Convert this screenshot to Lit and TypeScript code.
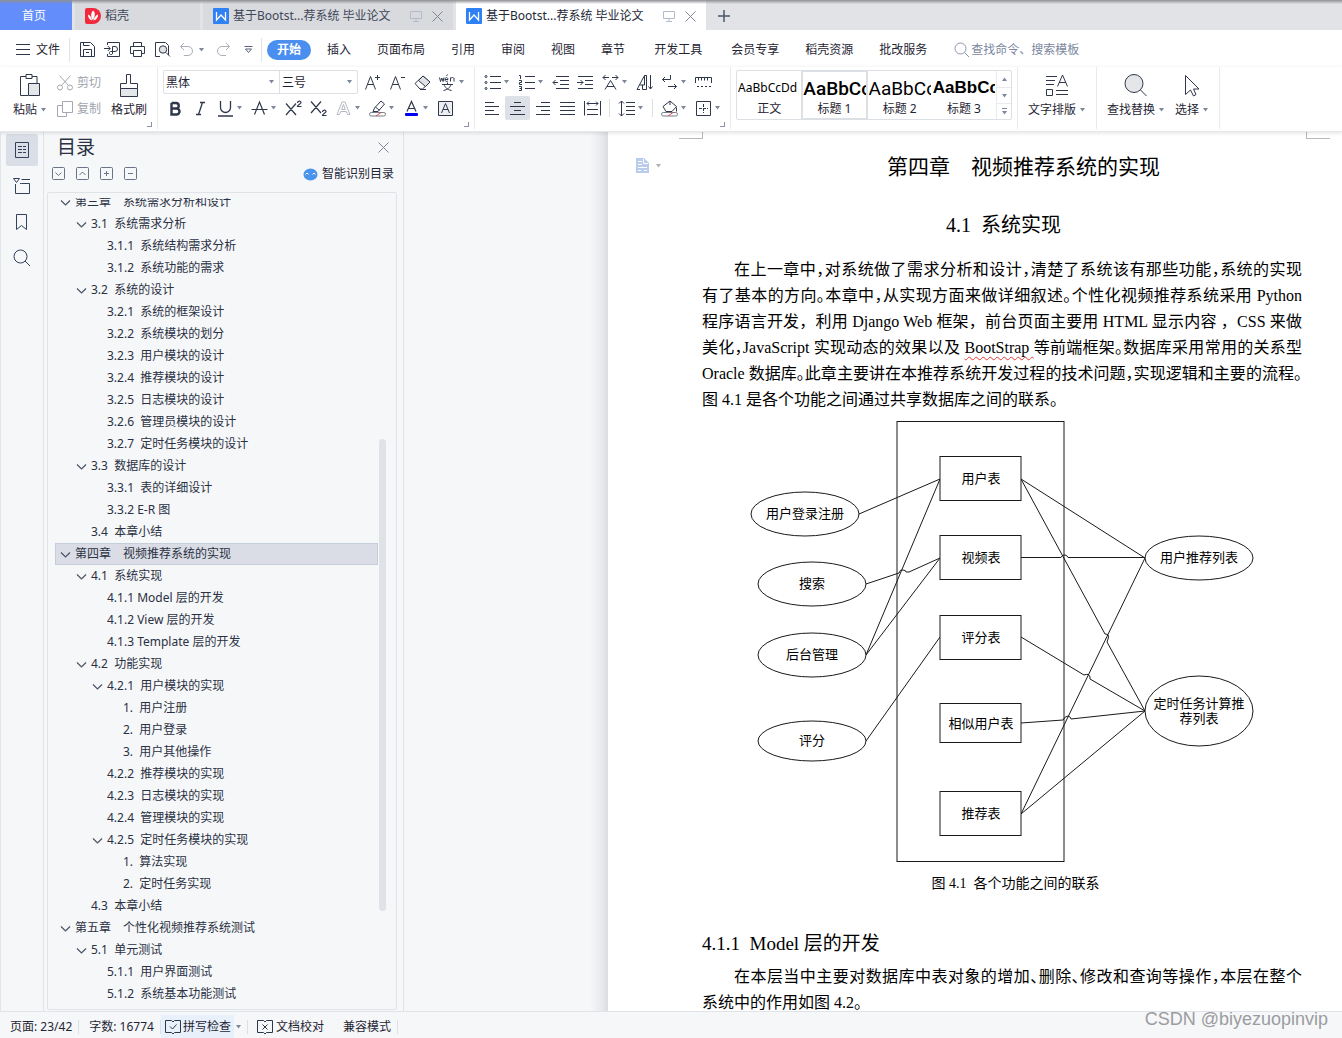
import { LitElement, html, svg, css, nothing, TemplateResult, SVGTemplateResult } from "lit";
import { customElement, state } from "lit/decorators.js";
import { classMap } from "lit/directives/class-map.js";

/* ---------- icons ---------- */

type Icon = { w: number; h: number; body: SVGTemplateResult };

const icons: Record<string, Icon> = {
  menu: { w: 15, h: 15, body: svg`<path d="M0 2.5h14M0 7.5h14M0 12.5h14" />` },
  save: { w: 17, h: 17, body: svg`<path d="M1.5 1.5h10l4 4v10h-14zM4.500 15.500v-7h8v7M4.500 1.500v3h6" /><path d="M7 11.500h3" />` },
  export: { w: 17, h: 17, body: svg`<path d="M3.500 4V1.500h12v14h-12V13M0 7.500h6M3.800 5l2.500 2.500L3.800 10M8.500 13V5.500h2.500a2 2 0 0 1 0 5H6.500a1.600 1.600 0 1 0 2 2" />` },
  print: { w: 17, h: 17, body: svg`<path d="M4.500 5.500v-4h8v4M4.500 12.500h-3v-7h14v7h-3M4.500 9.500h8v6h-8z" />` },
  preview: { w: 17, h: 17, body: svg`<path d="M6 15.500H1.500v-14h10l3 3V14" /><circle cx="9" cy="8.500" r="3.700" fill="#e2e4e8" /><path d="M12 11.500l4 4" />` },
  undo: { w: 15, h: 15, body: svg`<path stroke="#a9aeb9" d="M5 1L1.500 4.500 5 8M1.500 4.500H9a4.500 4.500 0 0 1 0 9H5" />` },
  redo: { w: 15, h: 15, body: svg`<path stroke="#a9aeb9" d="M10 1l3.500 3.500L10 8M13.500 4.500H6a4.500 4.500 0 0 0 0 9h4" />` },
  more: { w: 9, h: 9, body: svg`<path d="M0.500 1.500h8M1.500 4l3 3.500L7.500 4z" stroke="#59617a" />` },
  search: { w: 16, h: 16, body: svg`<circle cx="6.500" cy="6.500" r="5.500" /><path d="M10.500 10.500l4.500 4.500" />` },
  paste: { w: 24, h: 24, body: svg`<path d="M8 3.500H2.500v19H10M14 3.500h5V10M8 1.500h6v4H8z" /><path d="M10.500 10.500h11v12h-11z" fill="#e4e6ea" />` },
  brush: { w: 24, h: 24, body: svg`<path d="M3.500 15.500h17v8h-17z" fill="#e4e6ea" /><path d="M3.500 15.500v-5h6v-9h4v9h7v5" />` },
  cut: { w: 16, h: 16, body: svg`<g stroke="#a4a8b0"><circle cx="3" cy="12.500" r="2.500" /><circle cx="13" cy="12.500" r="2.500" /><path d="M2.500 0.500l9 10M13.500 0.500l-9 10" /></g>` },
  copy: { w: 16, h: 16, body: svg`<g stroke="#a4a8b0"><path d="M5.500 0.500h10v11h-10zM5.500 4.500h-5v11h9v-4" /></g>` },
  grow: { w: 17, h: 17, body: svg`<path d="M1.500 15.500L6.500 2.500l5 13M3.500 10.500h6M11 3.500h5M13.500 1v5" />` },
  shrink: { w: 17, h: 17, body: svg`<path d="M1.500 15.500L6.500 2.500l5 13M3.500 10.500h6M12 3.500h4" />` },
  eraser: { w: 17, h: 17, body: svg`<path d="M1 9.500L9 2l7 6-7.500 7H6z" /><path d="M4.500 6.500L9 2l7 6-4.500 4.500z" fill="#e0e2e6" /><path d="M6 15.500h6" />` },
  pinyin: { w: 17, h: 17, body: svg`<path d="M0.500 3.500l1 4 1.300-3.500L4 7.500l1-4M6 5.500h3c0-2.500-3-2.500-3 0s2 2 3 1.500M7.500 2l1-1.500M11.500 7.500v-4M11.500 5c.5-2 3.500-2 3.500 0v2.500M3 10.500h11M8.500 8.500v2M5 10.500c1 3 3 5 7.500 6M12 10.500c-1 3-3 5-7.500 6" />` },
  bold: { w: 17, h: 17, body: svg`<path stroke-width="2.400" d="M4.500 3v11.500h5a3 3 0 0 0 0-6h-5M9 8.500A2.700 2.700 0 0 0 9 3H4.500" />` },
  italic: { w: 17, h: 17, body: svg`<path d="M8 2.500h5M4 14.500h5M10.500 2.500l-4 12" stroke-width="1.300" />` },
  underline: { w: 17, h: 17, body: svg`<path stroke-width="1.300" d="M3.500 1v6.500a5 5 0 0 0 10 0V1M1 16h15" />` },
  strike: { w: 17, h: 17, body: svg`<path stroke-width="1.200" d="M3.500 14.500l5-12.500 5 12.500M0.500 9.500h16" />` },
  sup: { w: 17, h: 17, body: svg`<path stroke-width="1.200" d="M1 3.500l10 11.500M11 3.500L1 15M12.500 3c0-2.500 3.500-2.500 3.500-.5 0 1.500-3.500 2-3.500 4H16.500" />` },
  sub: { w: 17, h: 17, body: svg`<path stroke-width="1.200" d="M1 1.500L11 13M11 1.500L1 13M12.500 12c0-2.500 3.500-2.500 3.500-.5 0 1.500-3.500 2-3.500 4H16.500" />` },
  effects: { w: 17, h: 17, body: svg`<path stroke="#b4b8c0" d="M2 14.500L7 2h3l5 12.500h-2.500l-1.200-3H5.700l-1.200 3zM6.700 9.500h3.600L8.500 4.500z" />` },
  marker: { w: 17, h: 17, body: svg`<path d="M4 11.500L5.500 8 12 1l3.500 3-6.500 7.500zM6.500 7l4 3.500" /><rect x="0.500" y="12.500" width="16" height="3.500" rx="1.700" stroke="#777d89" fill="#fff" /><path d="M7 16l5-3.500" stroke="#e84a4a" />` },
  color: { w: 17, h: 17, body: svg`<path stroke-width="1.200" d="M4 11.500l4.500-10 4.500 10M5.500 8.500h6" /><rect x="2" y="13" width="13" height="3" rx="1" fill="#0000f5" stroke="none" />` },
  charbox: { w: 17, h: 17, body: svg`<path d="M1.500 1.500h14v14h-14z" fill="#eceef1" /><path d="M4.500 13l4-9.500 4 9.500M6 9.500h5" />` },
  bullets: { w: 17, h: 17, body: svg`<path d="M6 2.500h11M6 8.500h11M6 14.500h11" /><circle cx="2" cy="2.500" r="1" /><circle cx="2" cy="8.500" r="1" /><circle cx="2" cy="14.500" r="1" />` },
  numbers: { w: 17, h: 17, body: svg`<path d="M7 2.500h10M7 8.500h10M7 14.500h10M1 1.500h1.500V5M1 6.500h2.500v2H1.500v2H4M1 12.500h2.500v4H1M1.500 14.500h2" />` },
  outdent: { w: 17, h: 17, body: svg`<path d="M4 2.500h13M8 6.500h9M8 10.500h9M4 14.500h13M1 8.500h5M3.500 6L1 8.500 3.500 11" />` },
  indent: { w: 17, h: 17, body: svg`<path d="M1 2.500h15M8 6.500h8M8 10.500h8M1 14.500h15M0 8.500h6M3.500 6L6 8.500 3.500 11" />` },
  scale: { w: 17, h: 17, body: svg`<path d="M3 15.500l5.500-9 5.500 9M5 12.500h7M1 3.500h6M10 3.500h6M3.500 1L1 3.500 3.500 6M13.500 1L16 3.500 13.500 6" />` },
  sort: { w: 17, h: 17, body: svg`<path d="M1 15.500L8.500 1.500h2v14h-4v-4.500H3.500M8.500 1.500v9.500H6M1 15.500h3M14.500 1v14M12.500 12.500l2 2.500 2-2.500" />` },
  wrap: { w: 17, h: 17, body: svg`<path d="M9.500 1v4.500h-8M4 3L1.500 5.500 4 8M7 12.500h8.500M13 10l2.500 2.500L13 15" />` },
  ruler: { w: 17, h: 17, body: svg`<path d="M0.500 9V3.500h16V9M3.500 3.500v3M6.500 3.500v3M9.500 3.500v3M12.500 3.500v3M2 12.500h2M6 12.500h2M10 12.500h2M14 12.500h2" />` },
  left: { w: 17, h: 17, body: svg`<path d="M1 2.500h9M1 6.500h14M1 10.500h9M1 14.500h14" />` },
  center: { w: 17, h: 17, body: svg`<path d="M5 2.500h7M1 6.500h15M5 10.500h7M1 14.500h15" />` },
  right: { w: 17, h: 17, body: svg`<path d="M7 2.500h9M2 6.500h14M7 10.500h9M2 14.500h14" />` },
  justify: { w: 17, h: 17, body: svg`<path d="M1 2.500h15M1 6.500h15M1 10.500h15M1 14.500h15" />` },
  distribute: { w: 17, h: 17, body: svg`<path d="M0.500 1v14.500M16.500 1v14.500M3 3.500h11M5 1.500l-2 2 2 2M12 1.500l2 2-2 2M3 9.500h11M3 14.500h11" />` },
  spacing: { w: 17, h: 17, body: svg`<path d="M3.500 1v15M1 3.500L3.500 1 6 3.500M1 13.500L3.500 16 6 13.500M8 2.500h9M8 6.500h9M8 10.500h9M8 14.500h9" />` },
  fill: { w: 17, h: 17, body: svg`<path d="M2 6.500L9 1l6.500 5.500L11 11.500H5zM9 1v4" /><path d="M15.500 7.500v4" /><rect x="0.500" y="12.500" width="16" height="3.500" rx="1.700" stroke="#777d89" fill="#fff" /><path d="M7 16l5-3.500" stroke="#e84a4a" />` },
  borders: { w: 17, h: 17, body: svg`<path d="M1.500 1.500h14v14h-14z" /><path d="M8.500 4v9M4 8.500h9" stroke-dasharray="3 1" />` },
  textLayout: { w: 24, h: 24, body: svg`<path d="M1 3.500h11M1 7.500h9M1 11.500h8M12.500 13.500L17.500 2l5 11.500M14 9.500h7M11 17.500h12M11 21.500h12M1.500 16.500h6v6h-6z" />` },
  find: { w: 24, h: 24, body: svg`<circle cx="10" cy="10.500" r="9" fill="#e4e6ea" /><path d="M16.500 17l6 6" />` },
  cursor: { w: 24, h: 24, body: svg`<path d="M5.500 2.500v19l5-4.500 3 6 2.500-1.500-2.500-5.500h5.500z" />` },
  outline: { w: 18, h: 18, body: svg`<path stroke="#33415c" d="M2.500 1.500h13v15h-13zM5 5.500h4M10 5.500h3M5 8.500h4M10 8.500h3M5 11.500h4M10 11.500h3" />` },
  folder: { w: 18, h: 18, body: svg`<path stroke="#33415c" d="M0.500 1.500h6L3.500 5.500zM8.500 2.500H17M2.500 7v9.500h14v-10h-8l-1.500 0" />` },
  bookmark: { w: 18, h: 18, body: svg`<path stroke="#33415c" d="M3.500 1.500h10v15l-5-4-5 4z" />` },
  magnifier: { w: 18, h: 18, body: svg`<circle stroke="#33415c" cx="7.500" cy="7.500" r="6.500" /><path stroke="#33415c" d="M12 12l5 5" />` },
  boxDown: { w: 14, h: 14, body: svg`<rect x="0.500" y="0.500" width="12" height="12" rx="1" stroke="#6b7386" /><path d="M3.500 5.500l3 3 3-3" stroke="#6b7386" />` },
  boxUp: { w: 14, h: 14, body: svg`<rect x="0.500" y="0.500" width="12" height="12" rx="1" stroke="#6b7386" /><path d="M3.500 8l3-3 3 3" stroke="#6b7386" />` },
  boxPlus: { w: 14, h: 14, body: svg`<rect x="0.500" y="0.500" width="12" height="12" rx="1" stroke="#6b7386" /><path d="M4 6.500h5M6.500 4v5" stroke="#6b7386" />` },
  boxMinus: { w: 14, h: 14, body: svg`<rect x="0.500" y="0.500" width="12" height="12" rx="1" stroke="#6b7386" /><path d="M4 6.500h5" stroke="#6b7386" />` },
  smart: { w: 15, h: 13, body: svg`<ellipse cx="7.500" cy="6.500" rx="7" ry="6" fill="#4a94ee" stroke="none" /><path stroke="#fff" d="M2.500 6.500L4 5l1.500 1.500M9.500 6.500L11 5l1.500 1.500" />` },
  chevron: { w: 11, h: 11, body: svg`<path stroke="#4a5367" stroke-width="1.200" d="M1 3.500l4.500 4.500L10 3.500" />` },
  close: { w: 11, h: 11, body: svg`<path stroke="#7d8594" d="M0.500 0.500l10 10M10.500 0.500l-10 10" />` },
  monitor: { w: 12, h: 12, body: svg`<path stroke="#b4bccb" d="M0.500 1.500h11v7h-11zM6 8.500v2.500M3 11.500h6" />` },
  plus: { w: 12, h: 12, body: svg`<path stroke="#4c566c" stroke-width="1.500" d="M6 0v12M0 6h12" />` },
  docker: { w: 16, h: 16, body: svg`<path stroke="none" fill="#f2283c" d="M2 0h6a8 8 0 0 1 0 16H2a2 2 0 0 1-2-2V2a2 2 0 0 1 2-2z" /><path stroke="none" fill="#fff" d="M8 2.500c2.500 2 2.500 6-.2 9.500C5.500 9 5.800 5 8 2.500zM3 6.500c2 .5 3.500 2.500 4 6C4.500 12 3 9.500 3 6.500zM13 6.500c0 3-1.500 5.500-4.500 6 .3-1.500 2-5.500 4.500-6z" />` },
  writer: { w: 16, h: 16, body: svg`<rect width="16" height="16" rx="1" fill="#2f80f2" stroke="none" /><path stroke="#fff" stroke-width="1.300" d="M3.500 4v8L8 7l4.500 5V4" />` },
  spell: { w: 16, h: 16, body: svg`<path d="M0.500 1.500h6L8 3l1.500-1.500h6v12h-6L8 15l-1.500-1.500h-6zM5 7.500L7.500 10 11.500 5.500" />` },
  proof: { w: 16, h: 16, body: svg`<path d="M0.500 1.500h6L8 3l1.500-1.500h6v12h-6L8 15l-1.500-1.500h-6zM5.500 5.500l5 5M10.500 5.500l-5 5" />` },
  pageNote: { w: 13, h: 15, body: svg`<path fill="#b9cceb" stroke="none" d="M0 0h8l5 5v10H0z" /><path stroke="#fff" d="M2 3.500h4M2 6.500h4M2 9.500h9M2 12.500h3M8 12.500h3M7.500 1v4.500H12" />` },
};

const icon = (name: string): TemplateResult => {
  const i = icons[name];
  return html`<svg class="icon" width=${i.w} height=${i.h} viewBox="0 0 ${i.w} ${i.h}" aria-hidden="true">${i.body}</svg>`;
};

const caret = html`<svg class="caret" width="7" height="4" viewBox="0 0 7 4" aria-hidden="true"><path d="M1 0h5L3.500 3.500z" /></svg>`;

const shared = css`
  *, *::before, *::after { box-sizing: border-box; }
  button, select, input {
    font: inherit; color: inherit; background: none; border: 0; margin: 0; padding: 0;
  }
  button { cursor: pointer; white-space: nowrap; display: flex; align-items: center; flex: none; }
  a { color: inherit; text-decoration: none; }
  .icon { display: block; flex: none; fill: none; stroke: #2f374a; stroke-width: 1; }
  .caret { display: block; flex: none; fill: #7d879c; }
`;

/* ---------- tab strip ---------- */

@customElement("window-tabs")
class WindowTabs extends LitElement {
  static styles = [shared, css`
    :host { display: block; position: relative; background: #e2e3e7; flex: none; }
    :host::before {
      content: ""; position: absolute; inset: 0 0 auto; height: 4px;
      background: linear-gradient(#8f9094, rgba(143, 144, 148, 0)); pointer-events: none;
    }
    .strip { display: flex; height: 30px; gap: 3px; }
    .strip > * { padding-top: 2px; }
    .tab { display: flex; align-items: center; background: #d9dade; color: #3f4759; }
    .tab .name { gap: 4px; flex: 1; }
    .home { background: #628dfb; color: #fff; width: 72px; padding-left: 22px; }
    .docker { width: 125px; padding-left: 10px; }
    .doc { width: 250px; padding-left: 10px; padding-right: 10px; gap: 10px; }
    .active { background: #fff; color: #222836; }
    .add { padding-left: 9px; padding-right: 9px; }
  `];

  render() {
    const title = "基于Bootst...荐系统 毕业论文";
    const doc = (active: boolean) => html`
      <div class=${classMap({ tab: true, doc: true, active })}>
        <button class="name">${icon("writer")}${title}</button>
        <button aria-label="在新窗口显示">${icon("monitor")}</button>
        <button aria-label="关闭标签">${icon("close")}</button>
      </div>`;
    return html`<nav class="strip">
      <button class="tab home">首页</button>
      <div class="tab docker"><button class="name">${icon("docker")}稻壳</button></div>
      ${doc(false)}${doc(true)}
      <button class="add" aria-label="新建标签">${icon("plus")}</button>
    </nav>`;
  }
}

/* ---------- menu bar ---------- */

@customElement("menu-bar")
class MenuBar extends LitElement {
  static styles = [shared, css`
    :host { display: block; background: #fff; color: #1f2533; flex: none; }
    .bar { display: flex; align-items: center; height: 37px; padding-top: 2px; }
    .file { gap: 5px; padding: 0 9px 0 16px; }
    .rule { width: 1px; height: 24px; background: #dfe2e7; flex: none; }
    .quick { display: flex; align-items: center; gap: 8px; padding: 0 8px 0 9px; }
    .undo { gap: 4px; }
    .redo { padding: 0 5px 0 3px; }
    .tabs { display: flex; padding-left: 5px; gap: 3px; }
    .group { display: flex; }
    .item { height: 20px; padding: 0 13px; }
    .start { background: #4a8ff0; color: #fff; font-weight: 700; border-radius: 10px; padding: 0 10px; }
    .search { display: flex; align-items: center; gap: 1px; padding-left: 14px; flex: 1; }
    .search .icon { stroke: #8a94aa; }
    .search input { width: 160px; outline: 0; }
    .search input::placeholder { color: #7b869e; opacity: 1; }
  `];

  render() {
    const groups = [
      ["插入", "页面布局", "引用", "审阅", "视图", "章节"],
      ["开发工具"],
      ["会员专享", "稻壳资源", "批改服务"],
    ];
    return html`<div class="bar">
      <button class="file">${icon("menu")}文件</button>
      <span class="rule"></span>
      <div class="quick">
        <button aria-label="保存">${icon("save")}</button>
        <button aria-label="输出为PDF">${icon("export")}</button>
        <button aria-label="打印">${icon("print")}</button>
        <button aria-label="打印预览">${icon("preview")}</button>
        <button class="undo" aria-label="撤销">${icon("undo")}${caret}</button>
        <button class="redo" aria-label="恢复">${icon("redo")}</button>
        <button aria-label="自定义快速访问工具栏">${icon("more")}</button>
      </div>
      <span class="rule"></span>
      <nav class="tabs">
        <button class="item start">开始</button>
        ${groups.map(g => html`<div class="group">${g.map(t => html`<button class="item">${t}</button>`)}</div>`)}
      </nav>
      <label class="search">${icon("search")}<input type="text" aria-label="查找命令、搜索模板" placeholder="查找命令、搜索模板" /></label>
    </div>`;
  }
}

/* ---------- ribbon ---------- */

type Tool = [string, string, boolean?] | "|";

@customElement("tool-ribbon")
class ToolRibbon extends LitElement {
  @state() private align = "center";

  static styles = [shared, css`
    :host { display: block; background: #fff; color: #1f2533; flex: none; position: relative; z-index: 1;
      border-bottom: 1px solid #e6e8ec; box-shadow: 0 1px 4px rgba(0, 0, 0, 0.12); }
    .ribbon { display: flex; height: 64px; }
    .group { display: flex; flex-direction: column; gap: 2px; padding: 3px 5px 0; margin-bottom: 2px; border-right: 1px solid #e8eaee; flex: none; }
    .first { padding-left: 8px; }
    .row { display: flex; height: 24px; align-items: center; }
    .tall { height: 50px; align-items: stretch; }
    .tool { width: 25px; height: 24px; padding-left: 4px; border-radius: 2px; }
    .split { width: 34px; gap: 2px; }
    .on { background: #dde1e7; }
    .bar { width: 9px; display: flex; justify-content: center; }
    .bar::before { content: ""; width: 1px; height: 18px; background: #dcdfe4; }
    .launch { width: 5px; height: 5px; border: solid #8a93a5; border-width: 0 1px 1px 0; align-self: flex-end; }
    .big { flex-direction: column; padding: 3px 5px 0; gap: 4px; }
    .label { display: flex; align-items: center; gap: 3px; height: 18px; }
    .pair { display: flex; flex-direction: column; gap: 2px; padding: 1px 5px 0; color: #a0a5ae; }
    .pair button { height: 24px; gap: 4px; }
    .combos { display: flex; border: 1px solid #dcdfe4; border-radius: 2px; height: 24px; margin-right: 2px; }
    .combo { display: flex; align-items: center; padding-right: 4px; }
    .combo + .combo { border-left: 1px solid #dcdfe4; }
    .combo select { appearance: none; height: 22px; padding: 2px 0 0 2px; outline: 0; }
    .family { width: 104px; }
    .size { width: 66px; }
    .gallery { display: flex; width: 276px; height: 50px; border: 1px solid #dcdfe4; border-radius: 2px; }
    .style { flex: 1 1 0; min-width: 0; flex-direction: column; overflow: hidden; border: 1px solid transparent; }
    .style.picked { border: 2px solid #dcdfe4; margin: -1px 0; }
    .sample { height: 30px; line-height: 32px; width: 100%; overflow: hidden; text-align: left; color: #000; }
    .h1 { font: 500 19px/34px Roboto, sans-serif; }
    .h2 { font: 400 19px/34px Roboto, sans-serif; }
    .h3 { font: 700 17px/32px "Liberation Sans", sans-serif; }
    .caption { line-height: 18px; }
    .steps { width: 15px; flex: none; display: grid; grid-template-rows: 1fr 1fr 1fr; border-left: 1px solid #e8eaee; }
    .steps button { justify-content: center; flex-direction: column; gap: 2px; }
    .steps button + button { border-top: 1px solid #e8eaee; }
    .up .caret { transform: rotate(180deg); }
    .dash { width: 5px; height: 1px; background: #7d879c; }
  `];

  private tools(list: Tool[]) {
    return list.map(t => t === "|"
      ? html`<span class="bar"></span>`
      : html`<button class=${classMap({ tool: true, split: !!t[2], on: t[0] === this.align })} aria-label=${t[1]}
          @click=${() => { if (["left", "center", "right", "justify", "distribute"].includes(t[0])) this.align = t[0]; }}>
          ${icon(t[0])}${t[2] ? caret : nothing}</button>`);
  }

  private big(name: string, label: string, drop = true) {
    return html`<button class="big">${icon(name)}<span class="label">${label}${drop ? caret : nothing}</span></button>`;
  }

  render() {
    const styles = [["", "AaBbCcDd", "正文"], ["h1", "AaBbCc", "标题 1"], ["h2", "AaBbCc", "标题 2"], ["h3", "AaBbCc", "标题 3"]];
    return html`<div class="ribbon">
      <div class="group first">
        <div class="row tall">
          ${this.big("paste", "粘贴")}
          <div class="pair"><button>${icon("cut")}剪切</button><button>${icon("copy")}复制</button></div>
          ${this.big("brush", "格式刷", false)}
        </div>
        <button class="launch" aria-label="剪贴板设置"></button>
      </div>
      <div class="group">
        <div class="row">
          <div class="combos">
            <label class="combo"><select class="family" aria-label="字体"><option>黑体</option></select>${caret}</label>
            <label class="combo"><select class="size" aria-label="字号"><option>三号</option></select>${caret}</label>
          </div>
          ${this.tools([["grow", "增大字号"], ["shrink", "减小字号"], ["eraser", "清除格式"], ["pinyin", "拼音指南", true]])}
        </div>
        <div class="row">
          ${this.tools([["bold", "加粗"], ["italic", "倾斜"], ["underline", "下划线", true], ["strike", "删除线", true], ["sup", "上标"], ["sub", "下标"],
            ["effects", "文字效果", true], ["marker", "突出显示", true], ["color", "字体颜色", true], ["charbox", "字符底纹"]])}
        </div>
        <button class="launch" aria-label="字体设置"></button>
      </div>
      <div class="group">
        <div class="row">
          ${this.tools([["bullets", "项目符号", true], ["numbers", "编号", true], ["outdent", "减少缩进量"], ["indent", "增加缩进量"], ["scale", "中文版式", true],
            ["sort", "排序"], ["wrap", "显示段落标记", true], ["ruler", "制表位"]])}
        </div>
        <div class="row">
          ${this.tools([["left", "左对齐"], ["center", "居中对齐"], ["right", "右对齐"], ["justify", "两端对齐"], ["distribute", "分散对齐"], "|",
            ["spacing", "行距", true], "|", ["fill", "底纹颜色", true], ["borders", "边框", true]])}
        </div>
        <button class="launch" aria-label="段落设置"></button>
      </div>
      <div class="group">
        <div class="gallery">
          ${styles.map(([k, s, n]) => html`<button class=${classMap({ style: true, picked: k === "h1" })}>
            <span class="sample ${k}">${s}</span><span class="caption">${n}</span></button>`)}
          <div class="steps">
            <button class="up" aria-label="上一行">${caret}</button>
            <button aria-label="下一行">${caret}</button>
            <button aria-label="更多样式"><span class="dash"></span>${caret}</button>
          </div>
        </div>
      </div>
      <div class="group"><div class="row tall">${this.big("textLayout", "文字排版")}</div></div>
      <div class="group"><div class="row tall">${this.big("find", "查找替换")}${this.big("cursor", "选择")}</div></div>
    </div>`;
  }
}

/* ---------- outline panel ---------- */

type Entry = [level: number, text: string, open?: boolean];

const entries: Entry[] = [
  [0, "第三章　系统需求分析和设计", true],
  [1, "3.1  系统需求分析", true],
  [2, "3.1.1  系统结构需求分析"],
  [2, "3.1.2  系统功能的需求"],
  [1, "3.2  系统的设计", true],
  [2, "3.2.1  系统的框架设计"],
  [2, "3.2.2  系统模块的划分"],
  [2, "3.2.3  用户模块的设计"],
  [2, "3.2.4  推荐模块的设计"],
  [2, "3.2.5  日志模块的设计"],
  [2, "3.2.6  管理员模块的设计"],
  [2, "3.2.7  定时任务模块的设计"],
  [1, "3.3  数据库的设计", true],
  [2, "3.3.1  表的详细设计"],
  [2, "3.3.2 E-R 图"],
  [1, "3.4  本章小结"],
  [0, "第四章　视频推荐系统的实现", true],
  [1, "4.1  系统实现", true],
  [2, "4.1.1 Model 层的开发"],
  [2, "4.1.2 View 层的开发"],
  [2, "4.1.3 Template 层的开发"],
  [1, "4.2  功能实现", true],
  [2, "4.2.1  用户模块的实现", true],
  [3, "1.  用户注册"],
  [3, "2.  用户登录"],
  [3, "3.  用户其他操作"],
  [2, "4.2.2  推荐模块的实现"],
  [2, "4.2.3  日志模块的实现"],
  [2, "4.2.4  管理模块的实现"],
  [2, "4.2.5  定时任务模块的实现", true],
  [3, "1.  算法实现"],
  [3, "2.  定时任务实现"],
  [1, "4.3  本章小结"],
  [0, "第五章　个性化视频推荐系统测试", true],
  [1, "5.1  单元测试", true],
  [2, "5.1.1  用户界面测试"],
  [2, "5.1.2  系统基本功能测试"],
];

@customElement("outline-panel")
class OutlinePanel extends LitElement {
  @state() private current = 16;

  static styles = [shared, css`
    :host { display: flex; background: #f6f7f9; color: #2a3143; flex: none; border-left: 1px solid #e2e5ea; min-height: 0; }
    .rail { display: flex; flex-direction: column; gap: 4px; padding: 2px 5px; border-right: 1px solid #e0e3e8; }
    .rail button { width: 32px; height: 32px; justify-content: center; border-radius: 2px; }
    .rail .on { background: #dadee6; }
    .panel { width: 360px; display: flex; flex-direction: column; padding: 0 6px 1px 3px; border-right: 1px solid #e0e3e8; min-height: 0; }
    .head { display: flex; align-items: center; justify-content: space-between; height: 30px; padding: 0 8px 0 10px; }
    .head h2 { margin: 0; font-size: 19px; font-weight: 400; line-height: 30px; }
    .actions { display: flex; align-items: center; gap: 10px; height: 24px; padding: 0 3px 0 5px; margin-bottom: 6px; }
    .smart { margin-left: auto; gap: 4px; color: #1f2533; }
    .box { display: flex; flex: 1; min-height: 0; border: 1px solid #e0e3e8; border-radius: 2px; padding: 5px 10px 0 7px; }
    .list { list-style: none; margin: 0; padding: 0; flex: 1; overflow: hidden; }
    .entry { display: flex; align-items: center; height: 22px; }
    .entry:first-child { margin-top: -7px; }
    .entry a { flex: 1; line-height: 22px; white-space: pre; }
    .twist { width: 20px; padding-left: 5px; flex: none; }
    .l1 { padding-left: 16px; }
    .l2 { padding-left: 32px; }
    .l3 { padding-left: 48px; }
    .current { background: #dadde5; box-shadow: inset 0 0 0 1px #c5ccda; }
    .track { width: 7px; margin-left: 1px; display: grid; grid-template-rows: 241fr 473fr 98fr; }
    .thumb { grid-row: 2; background: #dfe2e6; border-radius: 4px; }
  `];

  render() {
    const rail = [["outline", "目录"], ["folder", "章节"], ["bookmark", "书签"], ["magnifier", "查找"]];
    const acts = [["boxDown", "展开"], ["boxUp", "收起"], ["boxPlus", "提升级别"], ["boxMinus", "降低级别"]];
    return html`
      <nav class="rail">${rail.map(([n, l], i) => html`<button class=${i ? "" : "on"} aria-label=${l}>${icon(n)}</button>`)}</nav>
      <section class="panel">
        <div class="head"><h2>目录</h2><button aria-label="关闭">${icon("close")}</button></div>
        <div class="actions">
          ${acts.map(([n, l]) => html`<button aria-label=${l}>${icon(n)}</button>`)}
          <button class="smart">${icon("smart")}智能识别目录</button>
        </div>
        <div class="box">
          <ul class="list">${entries.map(([lv, text, open], i) => html`
            <li class="entry l${lv} ${i === this.current ? "current" : ""}">
              ${open ? html`<button class="twist" aria-label="折叠">${icon("chevron")}</button>` : html`<span class="twist"></span>`}
              <a href="#s${i}" @click=${() => { this.current = i; }}>${text}</a>
            </li>`)}</ul>
          <div class="track"><div class="thumb"></div></div>
        </div>
      </section>`;
  }
}

/* ---------- figure ---------- */

@customElement("relation-figure")
class RelationFigure extends LitElement {
  static styles = css`
    :host { display: block; }
    svg { display: block; margin: 0 auto; }
    .shape { fill: #fff; stroke: #1a1a1a; stroke-width: 1; }
    .frame, .link { fill: none; stroke: #1a1a1a; stroke-width: 1; }
    text { font: 13px "Noto Sans CJK SC", sans-serif; text-anchor: middle; fill: #000; }
  `;

  render() {
    const tables: [string, number, number][] = [["用户表", 43, 44], ["视频表", 122, 44], ["评分表", 202, 44], ["相似用户表", 290, 39], ["推荐表", 378, 44]];
    const nodes: [number, number, number, string[]][] = [
      [103, 101, 22, ["用户登录注册"]],
      [110, 171, 22, ["搜索"]],
      [110, 242, 22, ["后台管理"]],
      [110, 328, 20, ["评分"]],
      [497, 145, 22, ["用户推荐列表"]],
      [497, 298, 35, ["定时任务计算推", "荐列表"]],
    ];
    const links = [
      "M157 101L238 66",
      "M164 171L197 160Q198 156 201 157Q204 157 204 159L207 159L238 145",
      "M164 242L238 66",
      "M164 242L238 145",
      "M164 328L238 224",
      "M319 66L443 145",
      "M319 66L403 221Q408 221 406 226L405 229L443 298",
      "M319 144.500H359Q360 141.500 363 142Q365 142 366 144.500H443",
      "M319 224L382 262Q387 260 388 264L388 266L443 298",
      "M319 310L361 307Q363 303 366 303Q369 304 369 306L443 298",
      "M319 401L443 145",
      "M319 401L443 298",
    ];
    return html`<svg width="600" height="458" viewBox="0 0 600 458" role="img" aria-label="各个功能之间的联系">
      <rect class="frame" x="195" y="8.500" width="167" height="440" />
      ${links.map(d => svg`<path class="link" d=${d} />`)}
      ${tables.map(([t, y, h]) => svg`<rect class="shape" x="238" y=${y + 0.5} width="81" height=${h} /><text x="279" y=${y + h / 2 + 5}>${t}</text>`)}
      ${nodes.map(([x, y, ry, t]) => svg`<ellipse class="shape" cx=${x} cy=${y} rx="54" ry=${ry} />
        ${t.map((s, i) => svg`<text x=${x} y=${y + 4 + i * 15 - (t.length - 1) * 7}>${s}</text>`)}`)}
    </svg>`;
  }
}

/* ---------- document ---------- */

@customElement("document-view")
class DocumentView extends LitElement {
  static styles = [shared, css`
    :host { display: flex; flex: 1; min-width: 0; min-height: 0; overflow: hidden; background: #f6f7f9; color: #000; }
    .gutter { flex: 0 0 204px; background: linear-gradient(to left, #dcdde1, #e8e9ec 6px, #f6f7f9 18px); }
    .paper { flex: 1; min-width: 0; background: #fff; }
    .marks { display: flex; justify-content: space-between; padding: 0 12px 0 71px; }
    .mark { width: 24px; height: 7px; border: solid #b9b9b9; border-width: 0 1px 1px 0; }
    .mark + .mark { border-width: 0 0 1px 1px; }
    .sheet { display: grid; grid-template-columns: 94px minmax(0, 1fr); padding-right: 40px; }
    .note { padding: 19px 0 0 28px; }
    .note button { gap: 6px; }
    .note .caret { fill: #b0b0b0; }
    .text { font: 16px/26px "Liberation Serif", "Noto Sans CJK SC", serif; }
    h1, h2, h3, p, figure { margin: 0; font-weight: 400; }
    h1 { font-size: 21px; line-height: 30px; margin-top: 13px; padding-left: 43px; text-align: center; }
    h2 { font-size: 20px; line-height: 30px; margin: 28px 0 17px; padding-left: 3px; text-align: center; white-space: pre; }
    h3 { font-size: 19px; line-height: 26px; margin: 34px 0 7px; white-space: pre; }
    .line { display: block; white-space: pre; text-align: justify; text-align-last: justify; }
    .first { padding-left: 32px; }
    .tight { font-feature-settings: "halt"; }
    .end { text-align-last: left; }
    .typo { text-decoration: underline wavy #e53935 1px; text-underline-offset: 3px; }
    figcaption { font-size: 14px; text-align: center; padding-left: 27px; white-space: pre; }
  `];

  render() {
    return html`
      <div class="gutter"></div>
      <article class="paper">
        <div class="marks"><span class="mark"></span><span class="mark"></span></div>
        <div class="sheet">
          <div class="note"><button aria-label="段落布局">${icon("pageNote")}${caret}</button></div>
          <div class="text">
            <h1>第四章　视频推荐系统的实现</h1>
            <h2>4.1  系统实现</h2>
            <p>
              <span class="line first tight">在上一章中，对系统做了需求分析和设计，清楚了系统该有那些功能，系统的实现</span>
              <span class="line tight">有了基本的方向。本章中，从实现方面来做详细叙述。个性化视频推荐系统采用 Python</span>
              <span class="line">程序语言开发，利用 Django Web 框架，前台页面主要用 HTML 显示内容 ，CSS 来做</span>
              <span class="line tight">美化，JavaScript 实现动态的效果以及 <span class="typo">BootStrap </span>等前端框架。数据库采用常用的关系型</span>
              <span class="line tight">Oracle 数据库。此章主要讲在本推荐系统开发过程的技术问题，实现逻辑和主要的流程。</span>
              <span class="line end">图 4.1 是各个功能之间通过共享数据库之间的联系。</span>
            </p>
            <figure><relation-figure></relation-figure><figcaption>图 4.1  各个功能之间的联系</figcaption></figure>
            <h3>4.1.1  Model 层的开发</h3>
            <p>
              <span class="line first tight">在本层当中主要对数据库中表对象的增加、删除、修改和查询等操作，本层在整个</span>
              <span class="line end">系统中的作用如图 4.2。</span>
            </p>
          </div>
        </div>
      </article>`;
  }
}

/* ---------- status bar ---------- */

@customElement("status-bar")
class StatusBar extends LitElement {
  static styles = [shared, css`
    :host { display: block; position: relative; z-index: 1; flex: none; background: #f6f7f9; color: #1f2533; border-top: 1px solid #e0e3e8; }
    .bar { display: flex; height: 26px; padding-top: 3px; }
    .cell { display: flex; align-items: center; padding: 0 6px 0 10px; margin: 0; }
    .rule { width: 1px; height: 14px; margin-top: 5px; background: #dcdfe4; }
    .check { gap: 2px; padding: 0 3px 0 4px; background: #e8f0fb; }
    .drop { padding: 0 5px 0 1px; }
    .proof { gap: 3px; padding: 0 9px; }
    .credit { position: absolute; right: 14px; top: -5px; font: 18px/24px "Liberation Sans", sans-serif; color: #9b9ca0; }
  `];

  render() {
    return html`<footer class="bar">
      <button class="cell">页面: 23/42</button><span class="rule"></span>
      <button class="cell">字数: 16774</button><span class="rule"></span>
      <button class="cell check">${icon("spell")}拼写检查</button>
      <button class="cell drop" aria-label="拼写检查选项">${caret}</button><span class="rule"></span>
      <button class="cell proof">${icon("proof")}文档校对</button>
      <button class="cell">兼容模式</button><span class="rule"></span>
    </footer><span class="credit">CSDN @biyezuopinvip</span>`;
  }
}

@customElement("app-root")
class AppRoot extends LitElement {
  static styles = css`
    :host {
      display: flex; flex-direction: column; height: 100vh; overflow: hidden;
      font: 12px/18px "Noto Sans", "Noto Sans CJK SC", sans-serif; background: #f6f7f9;
    }
    .work { display: flex; flex: 1; min-height: 0; }
  `;

  render() {
    return html`
      <window-tabs></window-tabs>
      <menu-bar></menu-bar>
      <tool-ribbon></tool-ribbon>
      <main class="work"><outline-panel></outline-panel><document-view></document-view></main>
      <status-bar></status-bar>`;
  }
}
